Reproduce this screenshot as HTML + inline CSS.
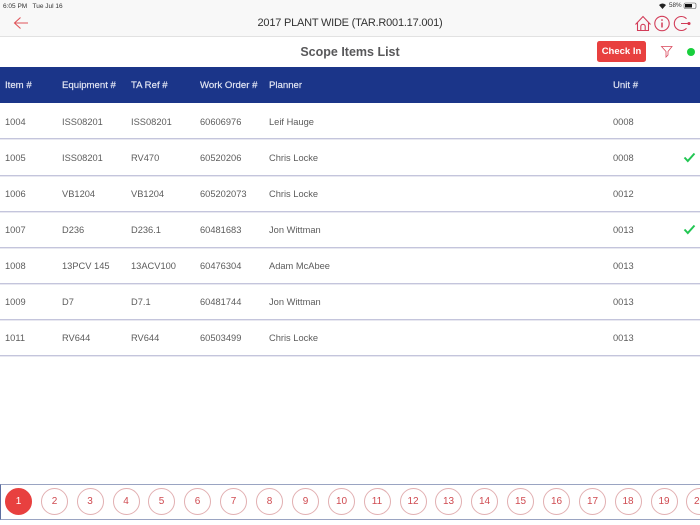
<!DOCTYPE html>
<html><head><meta charset="utf-8">
<style>
html,body{margin:0;padding:0;background:#fff}
body{width:700px;height:525px;overflow:hidden;position:relative;font-family:"Liberation Sans",sans-serif;color:#555}
.a{position:absolute;white-space:nowrap}
.top{left:0;top:0;width:700px;height:36px;background:#f8f8f8;border-bottom:1px solid #e2e2e2}
.hd{left:0;top:67px;width:700px;height:36px;background:#1b3589}
.h{top:79px;font-size:9.6px;line-height:12px;color:#e6e9f5;margin-top:0.500px;-webkit-text-stroke:.15px #e6e9f5}
.c{font-size:9.3px;line-height:12px;color:#5c5c5c;margin-top:1px}
.l{left:0;width:700px;height:2px;background:linear-gradient(#c4c5dc 50%,#e8e8f1 50%)}
.n{top:488px;width:25px;height:25px;border:1px solid #e2b0b2;border-radius:50%;text-align:center;line-height:25px;font-size:10px;color:#cf4a50;background:#fff}
</style></head><body>
<div class="a top"></div>
<div class="a" style="left:3px;top:1px;font-size:6.5px;line-height:9px;color:#333;margin-top:.500px">6:05 PM&nbsp;&nbsp; Tue Jul 16</div>
<div class="a" style="left:669px;top:1px;font-size:6.3px;line-height:9px;color:#333">58%</div>
<svg class="a" style="left:658px;top:2px" width="42" height="8" viewBox="0 0 42 8"><path d="M1 3Q4.500 0 8 3L4.500 7Z" fill="#222"/><rect x="26" y="1" width="12" height="5.500" rx="1.500" fill="none" stroke="#555" stroke-width=".6"/><rect x="27" y="2" width="7" height="3.500" fill="#111"/></svg>
<svg class="a" style="left:13px;top:16px" width="16" height="14" viewBox="0 0 16 14"><path d="M15 7H2M7.500 1.500L1.500 7L7.500 12.500" fill="none" stroke="#e0555a" stroke-width="1.100"/></svg>
<div class="a" style="left:200px;width:300px;text-align:center;top:15px;font-size:11px;line-height:15px;color:#333;margin-top:.500px;letter-spacing:-.22px">2017 PLANT WIDE (TAR.R001.17.001)</div>
<svg class="a" style="left:634px;top:14px" width="58" height="20" viewBox="0 0 58 20" fill="none" stroke="#d23c58" stroke-width="1.100"><path d="M1.500 10.500L9 2.500L16.500 10.500M3.500 8.500V16.500H14.500V8.500M6.800 16.500V12.500A2.200 2.200 0 0 1 11.200 12.500V16.500"/><circle cx="28" cy="9.500" r="7.200"/><path d="M28 8.500V13.500" stroke-width="1.500"/><path d="M28 5.300V6.800" stroke-width="1.500"/><path d="M52.500 4.800A7 7 0 1 0 52.500 14.200M47 9.500H55"/><circle cx="55" cy="9.500" r="1" fill="#d23c58"/></svg>
<div class="a" style="left:200px;width:300px;text-align:center;top:44px;font-size:12.500px;line-height:16px;font-weight:bold;color:#58585a">Scope Items List</div>
<div class="a" style="left:597px;top:41px;width:49px;height:21px;background:#e8403f;border-radius:2.500px;color:#fff;font-size:9.500px;font-weight:bold;text-align:center;line-height:21px">Check In</div>
<svg class="a" style="left:660px;top:45px" width="14" height="13" viewBox="0 0 14 13"><path d="M1.500 1.500H12L8 6.500V10L6 12V6.500Z" fill="none" stroke="#d9465a" stroke-width=".8"/></svg>
<div class="a" style="left:687px;top:47.500px;width:8px;height:8px;border-radius:50%;background:#18cf3c"></div>
<div class="a hd"></div>
<div class="a h" style="left:5px">Item #</div><div class="a h" style="left:62px">Equipment #</div><div class="a h" style="left:131px">TA Ref #</div><div class="a h" style="left:200px">Work Order #</div><div class="a h" style="left:269px">Planner</div><div class="a h" style="left:613px">Unit #</div>

<div class="a c" style="left:5px;top:115px">1004</div><div class="a c" style="left:62px;top:115px">ISS08201</div><div class="a c" style="left:131px;top:115px">ISS08201</div><div class="a c" style="left:200px;top:115px">60606976</div><div class="a c" style="left:269px;top:115px">Leif Hauge</div><div class="a c" style="left:613px;top:115px">0008</div>
<div class="a l" style="top:138px"></div>
<div class="a c" style="left:5px;top:151px">1005</div><div class="a c" style="left:62px;top:151px">ISS08201</div><div class="a c" style="left:131px;top:151px">RV470</div><div class="a c" style="left:200px;top:151px">60520206</div><div class="a c" style="left:269px;top:151px">Chris Locke</div><div class="a c" style="left:613px;top:151px">0008</div>
<svg class="a" style="left:683px;top:152px" width="13" height="11" viewBox="0 0 13 11"><path d="M1.500 5.500L4.800 9L11.500 1.500" fill="none" stroke="#22c653" stroke-width="2"/></svg>
<div class="a l" style="top:175px"></div>
<div class="a c" style="left:5px;top:187px">1006</div><div class="a c" style="left:62px;top:187px">VB1204</div><div class="a c" style="left:131px;top:187px">VB1204</div><div class="a c" style="left:200px;top:187px">605202073</div><div class="a c" style="left:269px;top:187px">Chris Locke</div><div class="a c" style="left:613px;top:187px">0012</div>
<div class="a l" style="top:211px"></div>
<div class="a c" style="left:5px;top:223px">1007</div><div class="a c" style="left:62px;top:223px">D236</div><div class="a c" style="left:131px;top:223px">D236.1</div><div class="a c" style="left:200px;top:223px">60481683</div><div class="a c" style="left:269px;top:223px">Jon Wittman</div><div class="a c" style="left:613px;top:223px">0013</div>
<svg class="a" style="left:683px;top:224px" width="13" height="11" viewBox="0 0 13 11"><path d="M1.500 5.500L4.800 9L11.500 1.500" fill="none" stroke="#22c653" stroke-width="2"/></svg>
<div class="a l" style="top:247px"></div>
<div class="a c" style="left:5px;top:259px">1008</div><div class="a c" style="left:62px;top:259px">13PCV 145</div><div class="a c" style="left:131px;top:259px">13ACV100</div><div class="a c" style="left:200px;top:259px">60476304</div><div class="a c" style="left:269px;top:259px">Adam McAbee</div><div class="a c" style="left:613px;top:259px">0013</div>
<div class="a l" style="top:283px"></div>
<div class="a c" style="left:5px;top:295px">1009</div><div class="a c" style="left:62px;top:295px">D7</div><div class="a c" style="left:131px;top:295px">D7.1</div><div class="a c" style="left:200px;top:295px">60481744</div><div class="a c" style="left:269px;top:295px">Jon Wittman</div><div class="a c" style="left:613px;top:295px">0013</div>
<div class="a l" style="top:319px"></div>
<div class="a c" style="left:5px;top:331px">1011</div><div class="a c" style="left:62px;top:331px">RV644</div><div class="a c" style="left:131px;top:331px">RV644</div><div class="a c" style="left:200px;top:331px">60503499</div><div class="a c" style="left:269px;top:331px">Chris Locke</div><div class="a c" style="left:613px;top:331px">0013</div>
<div class="a l" style="top:355px"></div>

<div class="a" style="left:0;top:484px;width:699px;height:34px;border:1px solid #9aa4c2;border-left:1px solid #5d6ea0"></div>
<div class="a n" style="left:5px;background:#e8403f;border-color:#e8403f;color:#fff">1</div>
<div class="a n" style="left:41px">2</div><div class="a n" style="left:76.500px">3</div><div class="a n" style="left:112.500px">4</div><div class="a n" style="left:148px">5</div><div class="a n" style="left:184px">6</div><div class="a n" style="left:220px">7</div><div class="a n" style="left:256px">8</div><div class="a n" style="left:292px">9</div><div class="a n" style="left:328px">10</div><div class="a n" style="left:363.500px">11</div><div class="a n" style="left:399.500px">12</div><div class="a n" style="left:435px">13</div><div class="a n" style="left:471px">14</div><div class="a n" style="left:507px">15</div><div class="a n" style="left:543px">16</div><div class="a n" style="left:579px">17</div><div class="a n" style="left:614.500px">18</div><div class="a n" style="left:650.500px">19</div><div class="a n" style="left:686px">20</div>
</body></html>
